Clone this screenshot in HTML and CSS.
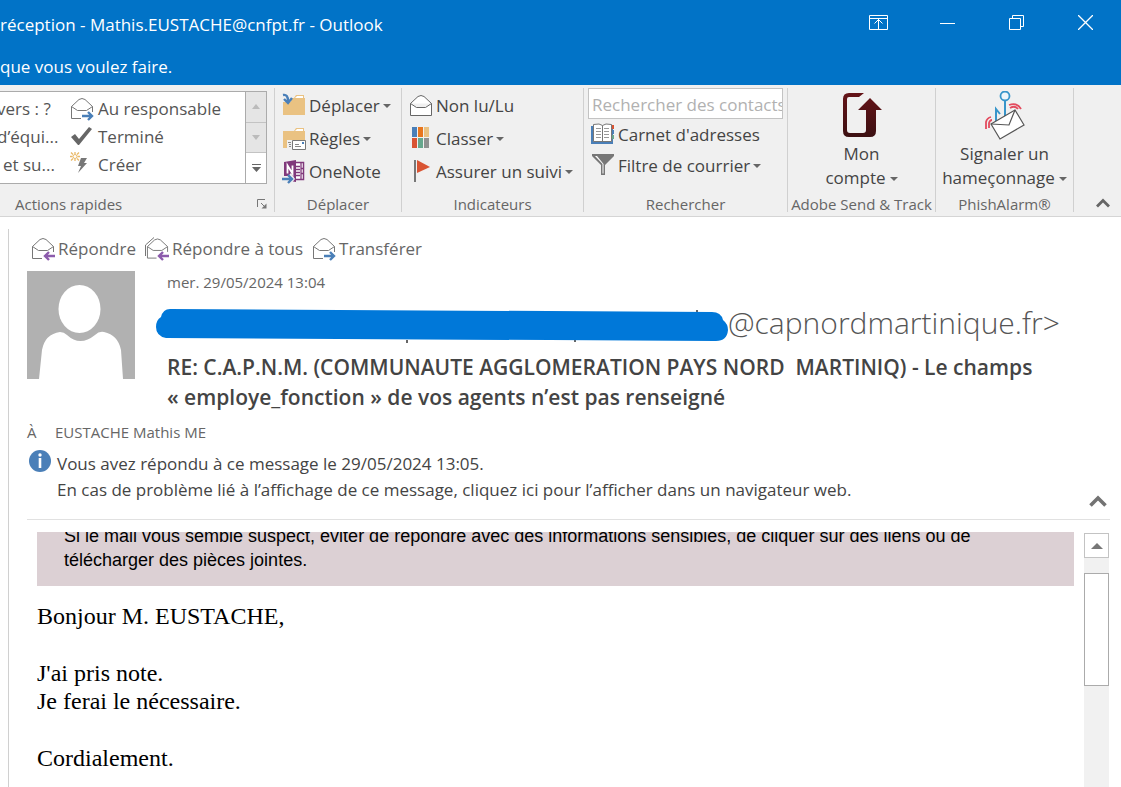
FILE: index.html
```html
<!DOCTYPE html>
<html lang="fr">
<head>
<meta charset="utf-8">
<title>Boîte de réception - Outlook</title>
<link rel="stylesheet" href="styles.css">
</head>
<body>
<svg class="defs" aria-hidden="true">
  <symbol id="envelope" viewBox="0 0 24 24">
    <path d="M1 9.500V21.500H23V9.500L15.500 2.500Q12 0 8.500 2.500Z" fill="#fff"/>
    <path d="M11 21.500H1.500V9.500L9 2.500Q12 .5 15 2.500L22.500 9.500V15M1.500 9.500L7.500 13.500H16.500L22.500 9.500" fill="none" stroke="#777"/>
  </symbol>
  <symbol id="arrow-right" viewBox="0 0 12 10">
    <path d="M0 5H10M6 1L10 5L6 9" fill="none" stroke="#4a7fb8" stroke-width="2.400"/>
  </symbol>
  <symbol id="arrow-left" viewBox="0 0 12 10">
    <path d="M12 5H2M6 1L2 5L6 9" fill="none" stroke="#8c5bac" stroke-width="2.400"/>
  </symbol>
  <symbol id="folder" viewBox="0 0 24 22">
    <path d="M1 4H12L14 1H22V4H23V21H1Z" fill="#eac282"/>
    <path d="M13 4L15 2H21V4Z" fill="#fff"/>
  </symbol>
</svg>

<header class="titlebar">
  <div class="titles">
    <h1 class="title">réception - Mathis.EUSTACHE@cnfpt.fr - Outlook</h1>
    <p class="tellme">que vous voulez faire.</p>
  </div>
  <div class="controls">
    <button class="control" aria-label="Options d'affichage du ruban"><svg width="19" height="15" viewBox="0 0 19 15" fill="none" stroke="#fff"><path d="M.5.5H18.500V14.500H.5ZM.5 3.500H18.500M9.500 4V14.500M5.500 8.500L9.500 4.500L13.500 8.500"/></svg></button>
    <button class="control" aria-label="Réduire"><svg width="15" height="15" viewBox="0 0 15 15" stroke="#fff"><path d="M0 8.500H15"/></svg></button>
    <button class="control" aria-label="Restaurer"><svg width="15" height="15" viewBox="0 0 15 15" fill="none" stroke="#fff"><path d="M.5 3.500H11.500V14.500H.5ZM3.500 3V.5H14.500V11.500H12"/></svg></button>
    <button class="control" aria-label="Fermer"><svg width="15" height="15" viewBox="0 0 15 15" stroke="#fff" stroke-width="1.300"><path d="M0 0L15 15M15 0L0 15"/></svg></button>
  </div>
</header>

<nav class="ribbon" aria-label="Ruban">
  <section class="group group-quick">
    <div class="gallery">
      <div class="steps steps-cut">
        <button class="step">vers : ?</button>
        <button class="step">d’équi...</button>
        <button class="step step-inset">et su...</button>
      </div>
      <div class="steps steps-main">
        <button class="step"><svg class="icon" viewBox="0 0 24 24"><use href="#envelope"/><rect x="11" y="15" width="13" height="9" fill="#fff"/><use href="#arrow-right" x="12" y="14" width="12" height="10"/></svg>Au responsable</button>
        <button class="step"><svg class="icon" viewBox="0 0 24 24"><path d="M1 12L5 9L9 14L19 2L22 4L9 20H8Z" fill="#666"/></svg>Terminé</button>
        <button class="step"><svg class="icon" viewBox="0 0 24 24"><path d="M11 5H17L14 10H17L8 20L11 13H8Z" fill="#777"/><circle cx="5" cy="3.500" r="2" fill="none" stroke="#eab968"/><path d="M5 -1V1M5 6V8M0 3.500H2.500M7.500 3.500H10M1 -.5L3 1.500M9 -.5L7 1.500M1 7.500L3 5.500M9 7.500L7 5.500" stroke="#eab968" stroke-width="1.300"/></svg>Créer</button>
      </div>
      <div class="spinner">
        <button class="spin" aria-label="Ligne précédente"><svg width="8" height="5" viewBox="0 0 8 5"><path d="M0 5L4 0L8 5Z" fill="#bbb"/></svg></button>
        <button class="spin" aria-label="Ligne suivante"><svg width="8" height="5" viewBox="0 0 8 5"><path d="M0 0H8L4 5Z" fill="#bbb"/></svg></button>
        <button class="spin spin-on" aria-label="Autres"><svg width="9" height="8" viewBox="0 0 9 8"><path d="M0 0H9V1H0ZM0 3H9L4.500 8Z" fill="#666"/></svg></button>
      </div>
    </div>
    <div class="caption caption-quick"><h2 class="label">Actions rapides</h2><button class="launcher" aria-label="Gérer les actions rapides"><svg width="10" height="10" viewBox="0 0 10 10"><path d="M.5 8V.5H8M4 4L8 8" fill="none" stroke="#777"/><path d="M9.500 4.500V9.500H4.500Z" fill="#777"/></svg></button></div>
  </section>

  <section class="group group-move">
    <div class="commands">
      <button class="command"><svg class="icon" viewBox="0 0 24 24"><use href="#folder" y="0" width="24" height="22"/><path d="M0 0H9V8H0Z" fill="#f0f0f0"/><path d="M1 1Q6 0 6 7M2 5L6 9L10 4" fill="none" stroke="#4a7fb8" stroke-width="2.400"/></svg>Déplacer<span class="caret"></span></button>
      <button class="command"><svg class="icon" viewBox="0 0 24 24"><use href="#folder" y="0" width="24" height="22"/><path d="M5 13H24V24H5Z" fill="#f0f0f0"/><path d="M10.500 13.500H23.500V22.500H10.500Z" fill="#fff" stroke="#777"/><path d="M13 17.500H17M13 19.500H19M6 15.500H9M7 17.500H9M7 19.500H9" stroke="#888"/><path d="M20 15H22V17H20Z" fill="#4a7fb8"/></svg>Règles<span class="caret"></span></button>
      <button class="command"><svg class="icon" viewBox="0 0 24 24"><path d="M12 2.500H21.500V19.500H12Z" fill="#fff" stroke="#80397b" stroke-width="1.500"/><path d="M14 6.500H18M14 9.500H18M14 12.500H18M14 15.500H18M19 3V19M19 8.500H22M19 13.500H22" stroke="#80397b" stroke-width="1.300"/><path d="M2 2L14 0V22L2 20Z" fill="#80397b"/><path d="M5.500 13.500V5.500L10.500 13.500V5.500" fill="none" stroke="#fff" stroke-width="1.800"/><path d="M0 16H6L9 13L13 19L9 24H0Z" fill="#f0f0f0"/><use href="#arrow-right" x="0" y="14" width="12" height="10"/></svg>OneNote</button>
    </div>
    <div class="caption"><h2 class="label">Déplacer</h2></div>
  </section>

  <section class="group group-flags">
    <div class="commands">
      <button class="command"><svg class="icon" viewBox="0 0 24 24"><path d="M1.500 9.500L9 2.500Q12 .5 15 2.500L22.500 9.500V21.500H1.500ZM1.500 9.500L7.500 13.500H16.500L22.500 9.500" fill="#fff" stroke="#666"/></svg>Non lu/Lu</button>
      <button class="command"><svg class="icon" viewBox="0 0 24 24"><path d="M3 0H8V10H3Z" fill="#4a7fb8"/><path d="M9 0H14V10H9Z" fill="#e8761e"/><path d="M15 0H20V10H15Z" fill="#eac282"/><path d="M3 11H8V21H3Z" fill="#d95433"/><path d="M9 11H14V21H9Z" fill="#67a78d"/><path d="M15 11H20V21H15Z" fill="#919191"/></svg>Classer<span class="caret"></span></button>
      <button class="command"><svg class="icon" viewBox="0 0 24 24"><path d="M5 0H7V22H5Z" fill="#777"/><path d="M8 0L21 7L8 13Z" fill="#d95433"/></svg>Assurer un suivi<span class="caret"></span></button>
    </div>
    <div class="caption"><h2 class="label">Indicateurs</h2></div>
  </section>

  <section class="group group-search">
    <div class="finder">
      <input class="search" type="text" aria-label="Rechercher des contacts" placeholder="Rechercher des contacts">
      <button class="command"><svg class="icon" viewBox="0 0 24 24"><path d="M0 3H22V21H0Z" fill="#4a7fb8"/><path d="M2.500 1.500Q9 0 11.500 2.500Q14 0 20.500 1.500V18.500H2.500Z" fill="#fff" stroke="#777"/><path d="M11.500 2.500V18.500" stroke="#777"/><path d="M5 5.500H10M5 8.500H10M5 11.500H10M5 14.500H10M13 5.500H18M13 8.500H18M13 11.500H18M13 14.500H18" stroke="#999"/><path d="M21 2H23V6H21Z" fill="#d95433"/><path d="M21 7H23V11H21Z" fill="#4a7fb8"/><path d="M21 12H23V16H21Z" fill="#67a78d"/></svg>Carnet d'adresses</button>
      <button class="command"><svg class="icon" viewBox="0 0 24 24"><path d="M1 0H23V2L14 11V21H10V11L1 2Z" fill="#777"/><path d="M4 2L11.500 10V19.500H12.500V10L6 2Z" fill="#fff"/></svg>Filtre de courrier<span class="caret"></span></button>
    </div>
    <div class="caption"><h2 class="label">Rechercher</h2></div>
  </section>

  <section class="group group-adobe">
    <button class="tile">
      <svg width="40" height="50" viewBox="0 0 40 50"><defs><linearGradient id="wine" x2="0" y2="1"><stop offset="0" stop-color="#651418"/><stop offset="1" stop-color="#3c1012"/></linearGradient></defs><path d="M22 2L17 6H7Q5 6 5 8V39Q5 42 8 42H21Q24 42 24 39V19H16L28 7L40 19H34V40Q34 46 28 46H7Q1 46 1 40V8Q1 2 7 2Z" fill="url(#wine)"/></svg>
      <span>Mon</span><span>compte<span class="caret"></span></span>
    </button>
    <div class="caption"><h2 class="label">Adobe Send &amp; Track</h2></div>
  </section>

  <section class="group group-phish">
    <button class="tile">
      <svg width="40" height="50" viewBox="0 0 40 50"><circle cx="20" cy="5" r="4.500" fill="#edf5fa" stroke="#3795ca" stroke-width="1.800"/><path d="M20 10V28M11 30V18L15 23" fill="none" stroke="#3795ca" stroke-width="2"/><path d="M6 33L30 19L39 34L15 48Z" fill="#fff" stroke="#555" stroke-width="1.200"/><path d="M6 33L24 34L30 19" fill="none" stroke="#555" stroke-width="1.200"/><path d="M1 38V31Q2 27 6 26M4 37V32Q5 29 7 29M24 14Q32 11 36 18M25 17Q30 14 33 18" fill="none" stroke="#e34b5e" stroke-width="1.800"/></svg>
      <span>Signaler un</span><span>hameçonnage<span class="caret"></span></span>
    </button>
    <div class="caption"><h2 class="label">PhishAlarm®</h2></div>
  </section>

  <button class="collapse" aria-label="Réduire le ruban"><svg width="14" height="10" viewBox="0 0 14 10"><path d="M1 8.500L7 2.500L13 8.500" fill="none" stroke="#666" stroke-width="2.800"/></svg></button>
</nav>

<main class="reading">
  <div class="replies">
    <button class="reply"><svg class="icon" viewBox="0 0 24 24"><use href="#envelope"/><rect x="11" y="15" width="13" height="9" fill="#fff"/><use href="#arrow-left" x="12" y="14" width="12" height="10"/></svg>Répondre</button>
    <button class="reply"><svg class="icon" viewBox="0 0 24 24"><path d="M.5 19V8L9 .5" fill="none" stroke="#777"/><use href="#envelope" x="1" width="23" height="24"/><rect x="12" y="15" width="12" height="9" fill="#fff"/><use href="#arrow-left" x="12" y="14" width="12" height="10"/></svg>Répondre à tous</button>
    <button class="reply"><svg class="icon" viewBox="0 0 24 24"><use href="#envelope"/><rect x="11" y="15" width="13" height="9" fill="#fff"/><use href="#arrow-right" x="12" y="14" width="12" height="10"/></svg>Transférer</button>
  </div>

  <div class="head">
    <svg class="avatar" viewBox="0 0 108 108" role="img" aria-label="Photo de l'expéditeur"><path d="M0 0H108V108H0Z" fill="#b1b1b1"/><ellipse cx="52.500" cy="38" rx="21" ry="24" fill="#fff"/><path d="M12 108L15 79Q18 63 33 61Q37 61 40 64Q53 76 68 64Q72 60 77 61Q91 64 94 79L96 108Z" fill="#fff"/></svg>
    <div class="meta">
      <p class="date">mer. 29/05/2024 13:04</p>
      <div class="sender">
        <svg class="marker" width="572" height="36" viewBox="0 0 572 36" aria-hidden="true"><path d="M251 33V36M419 33V35M541 3V5" stroke="#666" stroke-width="2"/><path d="M14 2L556 5Q565 5 567 13Q572 17 572 23Q571 34 560 34L10 31Q0 29 0 20Q0 13 5 10Q7 2 14 2Z" fill="#0078d9"/></svg>
        <span class="address">@capnordmartinique.fr&gt;</span>
      </div>
      <h2 class="subject">RE: C.A.P.N.M. (COMMUNAUTE AGGLOMERATION PAYS NORD&nbsp; MARTINIQ) - Le champs<br>« employe_fonction » de vos agents n’est pas renseigné</h2>
    </div>
  </div>

  <p class="recipients"><span class="to">À</span><span>EUSTACHE Mathis ME</span></p>

  <div class="notice">
    <svg class="info" width="22" height="22" viewBox="0 0 22 22" aria-hidden="true"><circle cx="11" cy="11" r="11" fill="#4a7fb8"/><circle cx="11" cy="5" r="1.700" fill="#fff"/><path d="M9.700 8H12.300V18H9.700Z" fill="#fff"/></svg>
    <div class="notice-text">
      <p>Vous avez répondu à ce message le 29/05/2024 13:05.</p>
      <p>En cas de problème lié à l’affichage de ce message, cliquez ici pour l’afficher dans un navigateur web.</p>
    </div>
    <button class="fold" aria-label="Réduire l'en-tête"><svg width="18" height="12" viewBox="0 0 18 12"><path d="M1.500 10.500L9 3L16.500 10.500" fill="none" stroke="#737373" stroke-width="3.600"/></svg></button>
  </div>

  <div class="viewer">
    <article class="message">
      <div class="warning"><p>Si le mail vous semble suspect, éviter de répondre avec des informations sensibles, de cliquer sur des liens ou de<br>télécharger des pièces jointes.</p></div>
      <div class="letter">
        <p>Bonjour M. EUSTACHE,</p>
        <p>J'ai pris note.<br>Je ferai le nécessaire.</p>
        <p>Cordialement.</p>
      </div>
    </article>
    <div class="scrollbar">
      <button class="scroll-up" aria-label="Défiler vers le haut"><svg width="12" height="6" viewBox="0 0 12 6"><path d="M0 6L6 0L12 6Z" fill="#777"/></svg></button>
      <div class="thumb"></div>
    </div>
  </div>
</main>
</body>
</html>
```
FILE: styles.css
```css
* {
  box-sizing: border-box;
}

body {
  margin: 0;
  height: 100vh;
  display: flex;
  flex-direction: column;
  overflow: hidden;
  background: #fff;
  color: #444;
  font: 17px/24px "Open Sans", "Noto Sans", sans-serif;
  white-space: nowrap;
}

h1, h2, p {
  margin: 0;
  font: inherit;
}

button {
  display: flex;
  align-items: center;
  margin: 0;
  padding: 0;
  border: 0;
  background: none;
  color: inherit;
  font: inherit;
}

svg {
  display: block;
  flex: none;
}

.defs {
  position: absolute;
  width: 0;
  height: 0;
}

.icon {
  width: 24px;
  height: 24px;
  overflow: visible;
}

.titlebar {
  display: flex;
  justify-content: space-between;
  flex: none;
  height: 85px;
  background: #0173c7;
  color: #fff;
}

.titles {
  display: flex;
  flex-direction: column;
  gap: 18px;
  padding-top: 13px;
}

.controls {
  display: flex;
  padding-right: 1px;
}

.control {
  justify-content: center;
  width: 69px;
  height: 45px;
}

.ribbon {
  display: flex;
  flex: none;
  height: 132px;
  padding: 3px 0 4px;
  background: #f0f0f0;
  border-bottom: 1px solid #d5d5d5;
}

.group {
  display: flex;
  flex-direction: column;
  justify-content: space-between;
  flex: none;
  border-right: 1px solid #d0d0d0;
}

.group-quick { width: 275px; }
.group-move { width: 127px; }
.group-flags { width: 182px; }
.group-search { width: 204px; }
.group-adobe { width: 148px; }
.group-phish { width: 138px; }

.caption {
  display: flex;
  justify-content: center;
  line-height: 16px;
  color: #666;
}

.label {
  font-size: 15px;
}

.caption-quick {
  justify-content: space-between;
  align-items: center;
  padding: 0 7px 0 15px;
}

.gallery {
  display: flex;
  width: 267px;
  height: 93px;
  margin-top: 3px;
  background: #fff;
  border: 1px solid #ababab;
  border-left: 0;
  color: #555;
}

.steps {
  padding-top: 3px;
}

.steps-cut {
  width: 73px;
  margin-left: -3px;
}

.steps-main {
  flex: 1;
}

.step {
  height: 28px;
  gap: 4px;
}

.step-inset {
  padding-left: 6px;
}

.spinner {
  display: flex;
  flex-direction: column;
  width: 21px;
  border-left: 1px solid #ababab;
}

.spin {
  flex: 1;
  justify-content: center;
  background: #e5e5e5;
  border-bottom: 1px solid #c3c3c3;
}

.spin-on {
  background: #fff;
  border-bottom: 0;
}

.commands {
  display: flex;
  flex-direction: column;
  gap: 9px;
  padding: 6px 0 0 7px;
}

.command {
  gap: 3px;
}

.caret {
  display: inline-block;
  width: 0;
  height: 0;
  border: 4px solid transparent;
  border-top-color: #666;
  border-bottom: 0;
  vertical-align: middle;
}

.finder {
  display: flex;
  flex-direction: column;
  gap: 7px;
  padding: 0 4px 0 7px;
}

.search {
  width: 195px;
  height: 31px;
  margin: 0 0 -3px -3px;
  padding: 1px 0 0 3px;
  background: #fff;
  border: 1px solid #c3c3c3;
  font: inherit;
}

.search::placeholder {
  color: #b1b1b1;
  opacity: 1;
}

.tile {
  flex-direction: column;
  padding-top: 3px;
}

.tile > svg {
  margin-bottom: 1px;
}

.tile .caret {
  margin-left: 4px;
}

.collapse {
  align-self: flex-end;
  margin: 0 11px 4px auto;
}

.reading {
  display: flex;
  flex-direction: column;
  flex: 1;
  min-height: 0;
  margin: 12px 11px 0 8px;
  padding: 8px 0 0 18px;
  border-left: 1px solid #d0d0d0;
}

.replies {
  display: flex;
  gap: 9px;
  padding-left: 4px;
  color: #666;
}

.reply {
  gap: 3px;
}

.head {
  display: flex;
  gap: 32px;
  padding-top: 10px;
}

.avatar {
  width: 108px;
  height: 108px;
}

.date {
  font-size: 15px;
  line-height: 22px;
  color: #666;
}

.sender {
  display: flex;
  align-items: center;
  height: 36px;
  margin: 14px 0 9px -11px;
}

.address {
  font-size: 30px;
  font-weight: 300;
  line-height: 32px;
  padding-bottom: 4px;
  color: #555;
}

.subject {
  font-size: 21px;
  font-weight: 600;
  line-height: 30px;
}

.recipients {
  display: flex;
  padding-top: 8px;
  font-size: 15px;
  color: #666;
}

.to {
  width: 28px;
}

.notice {
  display: flex;
  gap: 6px;
  padding: 6px 0 0 2px;
  border-bottom: 1px solid #e1e1e1;
}

.notice-text {
  flex: 1;
  padding: 1px 0 16px;
  line-height: 26px;
}

.fold {
  align-self: flex-end;
  margin: 0 3px 12px 0;
}

.viewer {
  display: flex;
  flex: 1;
  gap: 10px;
  min-height: 0;
  padding: 12px 1px 0 10px;
}

.message {
  flex: 1;
  min-width: 0;
  overflow: hidden;
}

.warning {
  display: flex;
  height: 54px;
  background: #dcd0d4;
  color: #000;
  font: 18px/24px "Liberation Sans", Arial, sans-serif;
}

.warning p {
  margin: -8px 0 0 27px;
}

.letter {
  padding-top: 16px;
  color: #000;
  font: 24px/28px "Liberation Serif", "Times New Roman", serif;
}

.letter p {
  margin-bottom: 29px;
}

.scrollbar {
  display: flex;
  flex-direction: column;
  gap: 15px;
  width: 25px;
  margin-top: 1px;
  background: #f1f1f1;
}

.scroll-up {
  justify-content: center;
  height: 25px;
  background: #fff;
  border: 1px solid #c3c3c3;
}

.thumb {
  height: 113px;
  background: #fff;
  border: 1px solid #ababab;
}
```
